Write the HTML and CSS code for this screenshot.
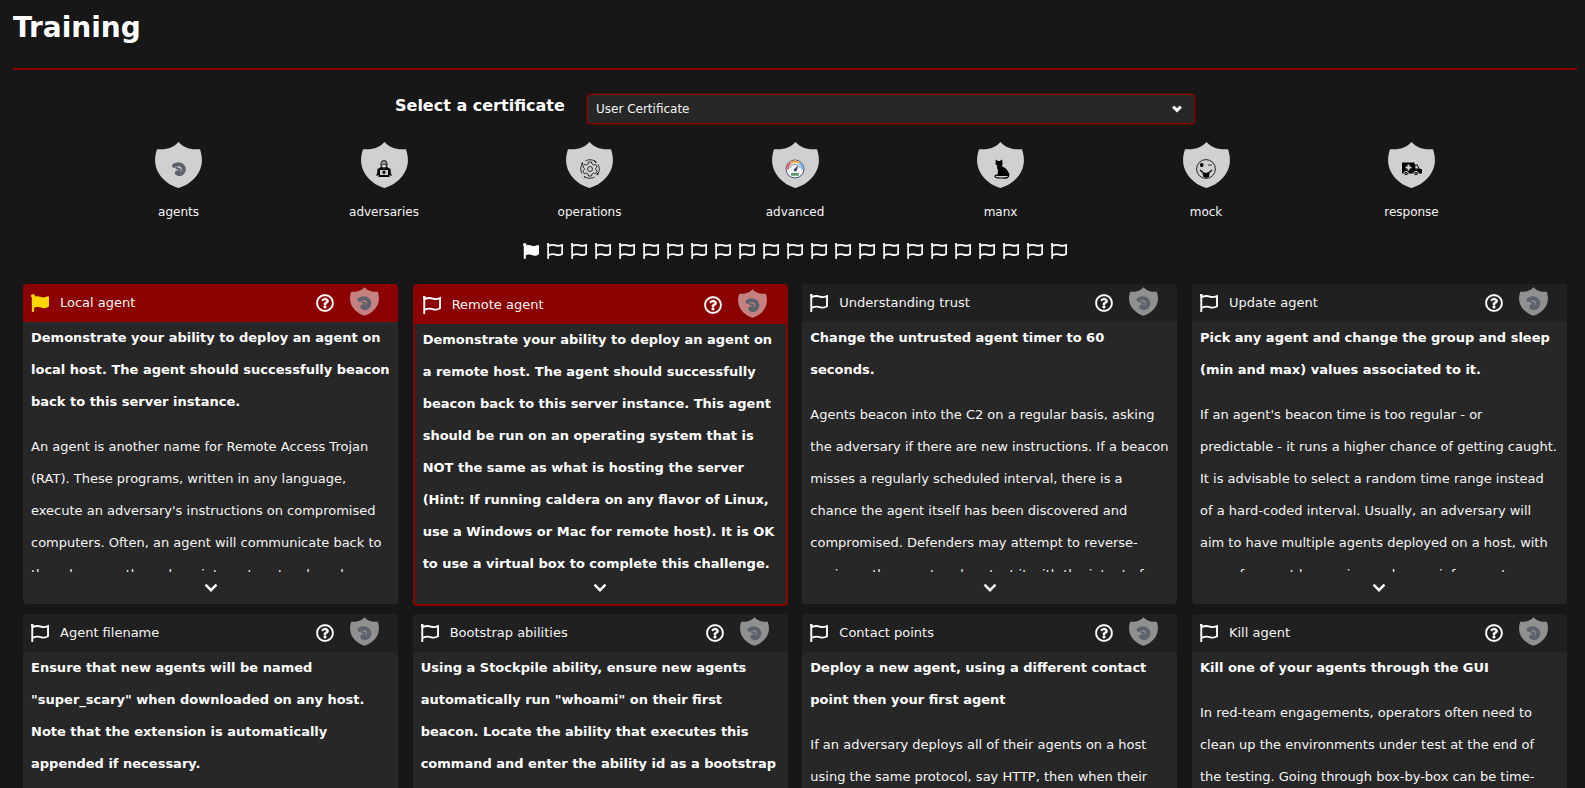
FILE: index.html
```html
<!DOCTYPE html>
<html lang="en">
<head>
<meta charset="utf-8">
<title>Training</title>
<link rel="stylesheet" href="styles.css">
</head>
<body>
<svg class="defs" width="0" height="0" aria-hidden="true">
  <symbol id="flag" viewBox="0 0 512 512"><g fill="none" stroke="currentColor" stroke-width="54"><path d="M36 10V512"/><path d="M36 92C90 72 130 58 185 58C255 58 300 90 360 90C405 90 440 78 484 62V350C450 372 410 388 360 388C300 388 255 358 200 358C140 358 90 372 36 395"/></g><circle cx="36" cy="38" r="38"/></symbol>
  <symbol id="flag-solid" viewBox="8 0 504 512" preserveAspectRatio="none"><path d="M349.565 98.783C295.978 98.783 251.721 64 184.348 64c-24.955 0-47.309 4.384-68.045 12.013a55.947 55.947 0 0 0 3.586-23.562C118.117 24.015 94.806 1.206 66.338.048 34.345-1.254 8 24.296 8 56c0 19.026 9.497 35.825 24 45.945V488c0 13.255 10.745 24 24 24h16c13.255 0 24-10.745 24-24v-94.4c28.311-12.064 63.582-22.122 114.435-22.122 53.588 0 97.844 34.783 165.217 34.783 48.169 0 86.667-16.294 122.505-40.858C506.84 359.452 512 349.571 512 339.045v-243.1c0-23.393-24.269-38.87-45.485-29.016-34.338 15.948-76.454 31.854-116.95 31.854z"/></symbol>
  <symbol id="help" viewBox="0 0 512 512"><path d="M256 8C119.043 8 8 119.083 8 256c0 136.997 111.043 248 248 248s248-111.003 248-248C504 119.083 392.957 8 256 8zm0 448c-110.532 0-200-89.431-200-200 0-110.495 89.472-200 200-200 110.491 0 200 89.471 200 200 0 110.53-89.431 200-200 200zm107.244-255.2c0 67.052-72.421 68.084-72.421 92.863V300c0 6.627-5.373 12-12 12h-45.647c-6.627 0-12-5.373-12-12v-8.659c0-35.745 27.1-50.034 47.579-61.516 17.561-9.845 28.324-16.541 28.324-29.579 0-17.246-21.999-28.693-39.784-28.693-23.189 0-33.894 10.977-48.942 29.969-4.057 5.12-11.46 6.071-16.666 2.124l-27.824-21.098c-5.107-3.872-6.251-11.066-2.644-16.363C184.846 131.491 214.94 112 261.794 112c49.071 0 101.45 38.304 101.45 88.8zM298 368c0 23.159-18.841 42-42 42s-42-18.841-42-42 18.841-42 42-42 42 18.841 42 42z" stroke="currentColor" stroke-width="8"/></symbol>
  <symbol id="shield" viewBox="0 0 47 46"><path d="M23.5 0C28 5 34 8 45 7.2C46.600 12 47 16 46.900 19C46.500 32 36 42.500 23.500 46C11 42.500.5 32 .1 19C0 16 .4 12 2 7.200C13 8 19 5 23.500 0Z"/></symbol>
  <symbol id="worm" viewBox="0 0 14 14"><path fill="none" stroke="currentColor" stroke-width="4.200" stroke-linecap="round" stroke-linejoin="round" d="M2.200 3.700C4.500 1.800 8.500 1.600 10.500 4C12.500 6.500 12 10 9.600 11.300C7.800 12.200 5.900 11.900 4.900 11"/><path fill="none" stroke="currentColor" stroke-width="2" stroke-linecap="round" d="M4.300 9.700C5.300 9 6.200 9.700 7.300 9.200C8.400 8.600 8.100 7.300 6.900 7.100L4.500 6"/></symbol>
  <symbol id="chevron" viewBox="0 0 14 10"><path d="M1.500 1.700L7 7.200L12.500 1.700" fill="none" stroke="#fff" stroke-width="2.400"/></symbol>
</svg>
<main class="page">
  <h1 class="title">Training</h1>
  <hr class="rule">
  <div class="picker">
    <label class="picker-label">Select a certificate</label>
    <div class="select"><span>User Certificate</span><svg class="select-arrow" viewBox="0 0 10 8"><path d="M1.100 1.600L5 5.300L8.900 1.600" fill="none" stroke="#fff" stroke-width="3.100"/></svg></div>
  </div>
  <div class="badges" id="badges"></div>
  <div class="flags" id="flags"></div>
  <div class="cards" id="cards"></div>
</main>
<script src="main.js"></script>
</body>
</html>
```
FILE: styles.css
```css
html { background: #171717; }
body {
  margin: 0;
  height: 788px;
  overflow: hidden;
  background: #171717;
  color: #f5f5f5;
  font: 13px "DejaVu Sans", sans-serif;
}
svg { display: block; fill: currentColor; }
.defs { position: absolute; }
.page { height: 788px; overflow: hidden; padding: 0 8px 0 13px; }
.title { box-sizing: border-box; margin: 0; padding-top: 11px; height: 68px; font-size: 28px; line-height: 34px; font-weight: 700; color: #fff; }
.rule { margin: 0; height: 2px; border: 0; background: #8b0000; }
.picker { display: flex; margin: 24px 0 0 382px; height: 31px; }
.picker-label { width: 191.500px; padding-top: 2px; font-size: 16px; line-height: 19px; font-weight: 700; color: #fff; }
.select {
  box-sizing: border-box; width: 608.500px; height: 30px; padding: 0 12px 0 8.500px;
  display: flex; align-items: center; justify-content: space-between;
  border: 1px solid #8b0000; border-radius: 3px; background: #272727;
  box-shadow: 0 0 0 1px rgba(139, 0, 0, .35); font-size: 12px;
}
.select-arrow { width: 10px; height: 8px; margin-bottom: 1px; }
.badges { display: grid; grid-template-columns: repeat(7, 205.500px); justify-content: center; margin-top: 17px; height: 101px; }
.badge { display: flex; flex-direction: column; align-items: center; font-size: 12px; }
.badge-label { margin-top: 16px; line-height: 16px; }
.badge-icon, .mini { display: grid; place-items: center; }
.badge-icon > *, .mini > * { grid-area: 1 / 1; }
.shield { width: 47px; height: 46px; color: #d0d0d0; }
.glyph { width: 20px; height: 20px; margin-top: 7px; fill: #000; }
.flags { display: flex; justify-content: center; gap: 8px; height: 41px; }
.flags svg { width: 16px; height: 16px; color: #fff; }
.cards { display: grid; grid-template-columns: repeat(4, 375px); grid-auto-rows: 320px; justify-content: space-between; align-items: start; row-gap: 10px; padding: 0 10px; }
.card { height: 320px; border-radius: 4px; background: #272727; overflow: hidden; }
.card.current { box-sizing: border-box; height: 322px; border: 2px solid #8b0000; }
.card-head { display: flex; align-items: center; height: 38px; box-sizing: border-box; padding: 0 19px 0 8px; background: #202020; }
.current .card-head, .done .card-head { background: #8b0000; }
.current .card-head { padding-right: 18.500px; }
.card-head .flag { width: 18px; height: 18px; margin-right: 11px; color: #fff; }
.done .card-head .flag { color: #ffd700; }
.card-name { flex: 1; line-height: 18px; }
.help { width: 18px; height: 18px; color: #fff; }
.mini { margin: -4px 0 0 16px; }
.mini .shield { width: 29px; height: 29px; color: #fff; opacity: .5; }
.mini .worm { position: relative; width: 15px; height: 14px; margin-top: 3px; color: #5b626b; }
.card-body { height: 250px; overflow: hidden; padding: 0 8px; line-height: 32px; }
.card-body p { margin: 0 0 13px; }
.card-body strong { color: #fff; }
.card-more { display: flex; justify-content: center; padding-top: 10.500px; }
.current .card-more { padding-top: 8.500px; }
.card-more svg { width: 14px; height: 10px; }
```
FILE: main.js
```
const use = (id, cls) => `<svg class="${cls}"><use href="#${id}"/></svg>`;

const glyphs = {
  agents: `<svg x="3" y="3" width="14" height="14" color="#5b626b"><use href="#worm"/></svg>`,
  adversaries: `<path d="M6.500 6.500C6 3 8 1 10 1S14 3 13.500 6.500L13 9H7Z" fill="#333"/><path d="M7.500 5.500C8 2.500 9 2 10 2S12 3 12 5Z" fill="#999"/><path d="M8 6H12L11.500 8.300H8.500Z" fill="#ddd"/><path d="M3.500 10L7 8L10 9.500L13 8L16.500 10L17 15L18.500 16.500H1.500L3 15Z"/><rect x="5" y="10" width="10" height="7" rx=".5"/><rect x="6" y="11" width="8" height="5" fill="#c8c8c8"/><circle cx="10" cy="13" r="1.600"/><path d="M9.500 13H10.500V15.500H9.500Z"/><path d="M4.500 17H15.500V18H4.500Z"/>`,
  operations: `<g fill="none" stroke="#222" stroke-width=".9"><circle cx="10" cy="10" r="9.300" stroke-dasharray="10.600 4" stroke-dashoffset="5"/><circle cx="10" cy="10" r="2.500"/><path d="M8.500 3H11.500L12 5L13.700 6L15.700 5.300L17.200 8L15.600 9.400V10.600L17.200 12L15.700 14.700L13.700 14L12 15L11.500 17H8.500L8 15L6.300 14L4.300 14.700L2.800 12L4.400 10.600V9.400L2.800 8L4.300 5.300L6.300 6L8 5Z"/></g><path d="M14 1.300L17 3L15.500 4ZM1 4L3.300 3.500L2.500 6ZM4 17L6 18.800L3.800 18.500ZM17 14L19 15L16.500 16.500Z"/>`,
  advanced: `<circle cx="10" cy="10" r="9" fill="#f4f6f8" stroke="#42507c"/><g fill="none" stroke-width="2.600"><path d="M2.700 10.500A7.300 7.300 0 0 1 5.800 4" stroke="#e06b6b"/><path d="M6 3.800A7.300 7.300 0 0 1 14 3.800" stroke="#f0a94c"/><path d="M14.200 4A7.300 7.300 0 0 1 17.300 10.500" stroke="#7db5ee"/></g><path d="M4.800 9A5.500 5.500 0 0 1 15.200 9" fill="none" stroke="#42507c" stroke-width=".6"/><path d="M13.500 6.500L11.500 12L9.500 12.500L8.500 10.500Z" fill="#35466f"/><rect x="6" y="14" width="8" height="2.800" rx=".5" fill="#5d9871"/>`,
  manx: `<path d="M4.800.5L7 2H8.800L11 .5L11.600 4C11.500 6 10.500 7 12 8C15.500 9.500 18 12 18 17H8L6.500 16.500L7 11C6 9.500 6 8 6.200 7L4.500 5Z"/><path d="M17.500 14C19 19.500 15 19.200 10 19C6 19 4 18.500 4 17.500C4 15.800 6.500 16 8 16.500" fill="none" stroke="#000" stroke-width="1.200"/>`,
  mock: `<circle cx="10" cy="10" r="9.400" fill="none" stroke="#111" stroke-width=".9"/><circle cx="5.700" cy="6" r="1.900"/><path d="M12 6H16" stroke="#333"/><path d="M4 11Q10 18 16 11" fill="none" stroke="#111" stroke-width="1.200"/><path d="M6.500 14H13.500L13 18Q10 19.500 7.500 18Z"/>`,
  response: `<path d="M0 3.500H12.500V5.500H15.500L17.500 9.500L20 10.500V14.500H0Z"/><path d="M13.300 6.500H15L16.500 9.500H13.300Z" fill="#d0d0d0"/><path d="M6.500 5.500V11.500M3.500 8.500H9.500" stroke="#d0d0d0" stroke-width="2"/><g stroke="#d0d0d0"><circle cx="4" cy="14.500" r="2.200"/><circle cx="14" cy="14.500" r="2.200"/></g><g fill="#d0d0d0"><circle cx="4" cy="14.500" r=".7"/><circle cx="14" cy="14.500" r=".7"/></g>`
};

document.getElementById('badges').innerHTML = Object.entries(glyphs).map(([name, art]) =>
  `<div class="badge"><div class="badge-icon">${use('shield', 'shield')}<svg class="glyph" viewBox="0 0 20 20">${art}</svg></div><span class="badge-label">${name}</span></div>`).join('');

document.getElementById('flags').innerHTML = Array.from({ length: 23 }, (_, i) => use(i ? 'flag' : 'flag-solid', 'flag')).join('');

const cards = [
  ['Local agent', 'Demonstrate your ability to deploy an agent on local host. The agent should successfully beacon back to this server instance.', 'An agent is another name for Remote Access Trojan (RAT). These programs, written in any language, execute an adversary\'s instructions on compromised computers. Often, an agent will communicate back to the adversary through an internet protocol, such'],
  ['Remote agent', 'Demonstrate your ability to deploy an agent on a remote host. The agent should successfully beacon back to this server instance. This agent should be run on an operating system that is NOT the same as what is hosting the server (Hint: If running caldera on any flavor of Linux, use a Windows or Mac for remote host). It is OK to use a virtual box to complete this challenge.', ''],
  ['Understanding trust', 'Change the untrusted agent timer to 60 seconds.', 'Agents beacon into the C2 on a regular basis, asking the adversary if there are new instructions. If a beacon misses a regularly scheduled interval, there is a chance the agent itself has been discovered and compromised. Defenders may attempt to reverse-engineer the agent and protect it with the intent of'],
  ['Update agent', 'Pick any agent and change the group and sleep (min and max) values associated to it.', 'If an agent\'s beacon time is too regular - or predictable - it runs a higher chance of getting caught. It is advisable to select a random time range instead of a hard-coded interval. Usually, an adversary will aim to have multiple agents deployed on a host, with some frequent beaconing and some infrequent.'],
  ['Agent filename', 'Ensure that new agents will be named "super_scary" when downloaded on any host. Note that the extension is automatically appended if necessary.', ''],
  ['Bootstrap abilities', 'Using a Stockpile ability, ensure new agents automatically run "whoami" on their first beacon. Locate the ability that executes this command and enter the ability id as a bootstrap', ''],
  ['Contact points', 'Deploy a new agent, using a different contact point then your first agent', 'If an adversary deploys all of their agents on a host using the same protocol, say HTTP, then when their'],
  ['Kill agent', 'Kill one of your agents through the GUI', 'In red-team engagements, operators often need to clean up the environments under test at the end of the testing. Going through box-by-box can be time-']
];

document.getElementById('cards').innerHTML = cards.map(([name, task, text], i) => `
<section class="card ${['done', 'current'][i] || ''}">
  <header class="card-head">${use(i ? 'flag' : 'flag-solid', 'flag')}<span class="card-name">${name}</span>${use('help', 'help')}<div class="mini">${use('shield', 'shield')}${use('worm', 'worm')}</div></header>
  <div class="card-body"><p><strong>${task}</strong></p><p>${text}</p></div>
  <div class="card-more">${use('chevron', 'chevron')}</div>
</section>`).join('');
```
